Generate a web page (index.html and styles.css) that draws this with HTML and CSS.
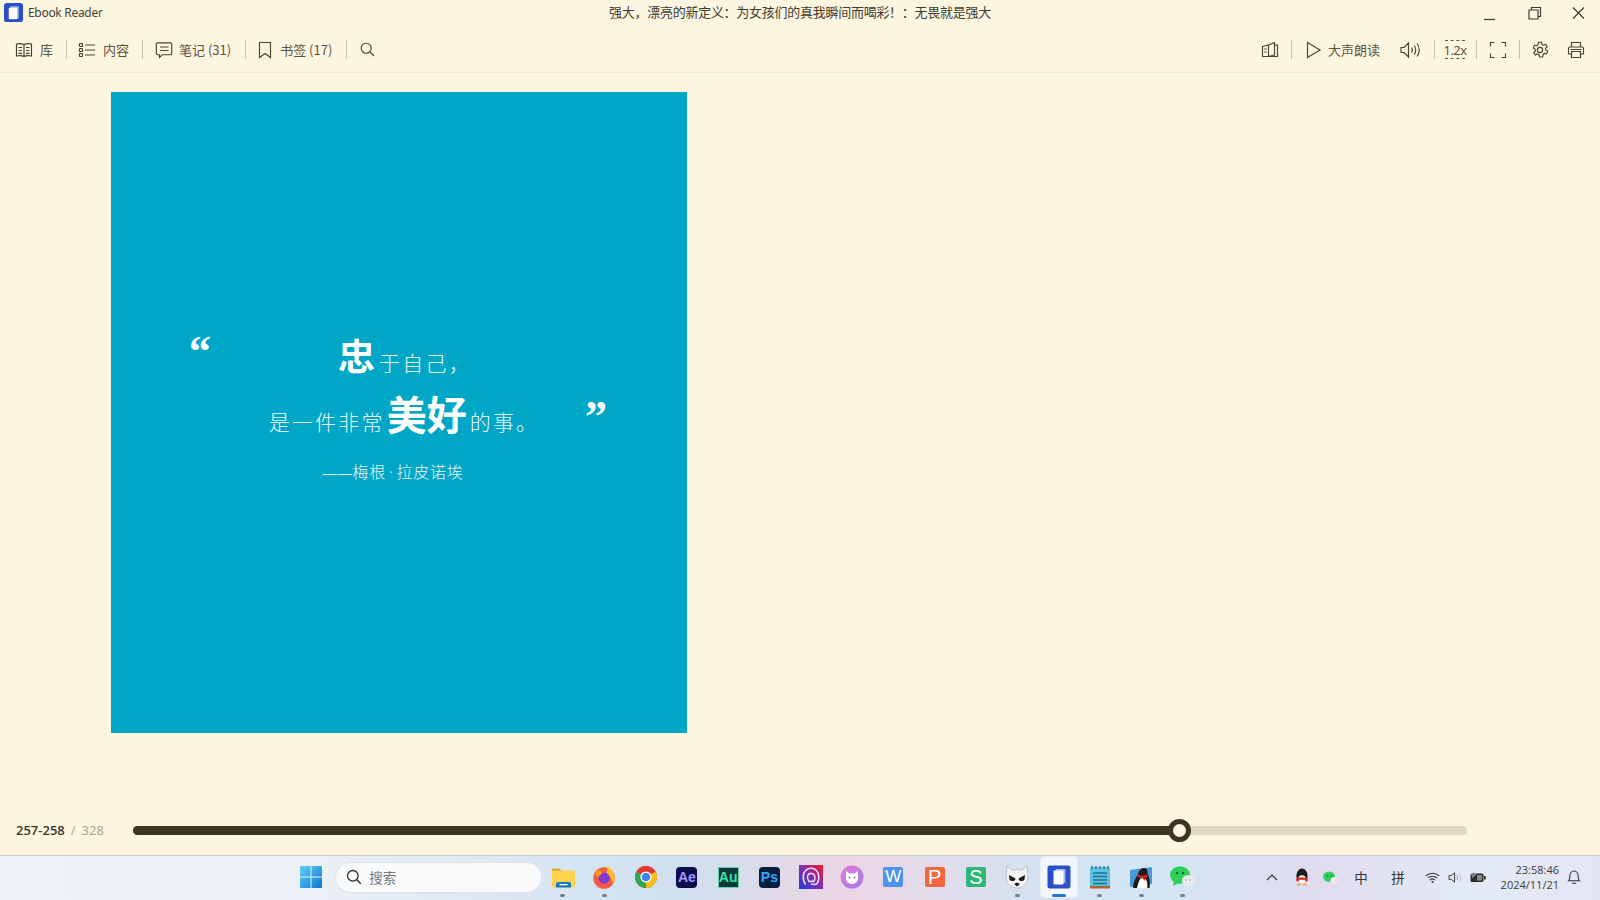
FILE: index.html
```html
<!DOCTYPE html>
<html lang="zh">
<head>
<meta charset="utf-8">
<title>Ebook Reader</title>
<link rel="stylesheet" href="styles.css">
</head>
<body>
<div class="app">
  <header class="titlebar">
    <div class="brand">
      <svg class="brand-icon" viewBox="0 0 20 20"><rect width="20" height="20" rx="3" fill="#2a4fc9"/><rect x="6.5" y="3.5" width="9" height="13" rx="1" fill="#9fb6ee"/><rect x="5" y="5" width="9" height="12" rx="1" fill="#fff"/></svg>
      <span>Ebook Reader</span>
    </div>
    <div class="doc-title">强大，漂亮的新定义：为女孩们的真我瞬间而喝彩！：无畏就是强大</div>
    <div class="win-controls">
      <svg class="win-btn" viewBox="0 0 44 26"><path d="M16 19.5h11" stroke="#3c3a34" stroke-width="1.2" fill="none"/></svg>
      <svg class="win-btn" viewBox="0 0 44 26"><path d="M17 10h9v9h-9zM19.5 10V7.5h9v9H26" stroke="#3c3a34" stroke-width="1.2" fill="none"/></svg>
      <svg class="win-btn" viewBox="0 0 44 26"><path d="M17 7.5l11 11M28 7.5l-11 11" stroke="#3c3a34" stroke-width="1.2" fill="none"/></svg>
    </div>
  </header>

  <nav class="toolbar">
    <div class="tool-group">
      <div class="tool t-lib">
        <svg class="ic" viewBox="0 0 18 18"><path d="M9 3.5C7 2.500 4 2.500 1.500 3v12c2.500-.5 5.500-.5 7.500.5 2-1 5-1 7.500-.5V3C14 2.500 11 2.500 9 3.500zM9 3.500v12M3.500 6.500h3.500M3.500 9.500h3.500M3.500 12.300h3.500M11 6.500h3.500M11 9.500h3.500M11 12.300h3.500"/></svg>
        <span>库</span>
      </div>
      <i class="sep"></i>
      <div class="tool t-toc">
        <svg class="ic" viewBox="0 0 18 18"><path d="M7 4h10M7 9h10M7 14h10"/><rect x="1.500" y="2.500" width="3" height="3" rx=".6"/><rect x="1.500" y="7.500" width="3" height="3" rx=".6"/><rect x="1.500" y="12.500" width="3" height="3" rx=".6"/></svg>
        <span>内容</span>
      </div>
      <i class="sep"></i>
      <div class="tool t-note">
        <svg class="ic" viewBox="0 0 18 18"><path d="M2.500 1.800h13a1.200 1.200 0 0 1 1.200 1.200v9.500a1.200 1.200 0 0 1-1.200 1.200H7.500L4.500 16.500v-2.800h-2a1.200 1.200 0 0 1-1.200-1.200V3a1.200 1.200 0 0 1 1.200-1.200zM5 6h8.500M5 9.500h8.500"/></svg>
        <span>笔记 (31)</span>
      </div>
      <i class="sep"></i>
      <div class="tool t-mark">
        <svg class="ic ic-narrow" viewBox="0 0 14 18"><path d="M1.500 1.500h11v15L7 12.500l-5.500 4z"/></svg>
        <span>书签 (17)</span>
      </div>
      <i class="sep"></i>
      <div class="tool t-search">
        <svg class="ic ic-small" viewBox="0 0 15 15"><circle cx="6.200" cy="6.200" r="5"/><path d="M10 10l4 4"/></svg>
      </div>
    </div>

    <div class="tool-group">
      <div class="tool t-bk">
        <svg class="ic" viewBox="0 0 18 18"><path d="M1.500 5.500l6-1.500v11.500h-6zM7.500 4l6-2.500v12.500l-6 1.500M13.500 4h3v11.500H7.500M3.300 8h2.400M3.300 11h2.400"/></svg>
      </div>
      <i class="sep"></i>
      <div class="tool t-play">
        <svg class="ic" viewBox="0 0 18 18"><path d="M2.500 1.500l12.500 7.500-12.500 7.500z"/></svg>
        <span>大声朗读</span>
      </div>
      <div class="tool t-vol">
        <svg class="ic ic-wide" viewBox="0 0 21 18"><path d="M1 6.500h3L8.500 2v14L4 11.500H1zM11.500 6.500c1 1.500 1 3.500 0 5M14.200 4.500c2 2.500 2 6.500 0 9M17 2.500c3 3.500 3 9.500 0 13"/></svg>
      </div>
      <i class="sep"></i>
      <div class="tool t-speed">
        <div class="speed"><span>1.2x</span></div>
      </div>
      <i class="sep"></i>
      <div class="tool t-full">
        <svg class="ic" viewBox="0 0 18 18"><path d="M1.500 5.500v-4h4M12.500 1.500h4v4M16.500 12.500v4h-4M5.500 16.500h-4v-4"/></svg>
      </div>
      <i class="sep"></i>
      <div class="tool t-gear">
        <svg class="ic" viewBox="0 0 18 18"><circle cx="9" cy="9" r="2.600"/><path d="M7.500 1.200h3l.5 2.300 1.500.7 2.100-1 1.600 2.400-1.600 1.600.2 1.700 1.900 1.200-1.100 2.800-2.300-.5-1.300 1.200-.3 2.400h-3l-.7-2.300-1.500-.7-2.100 1-1.600-2.400 1.600-1.600-.2-1.700-1.900-1.200 1.100-2.800 2.300.5 1.300-1.200z"/></svg>
      </div>
      <div class="tool t-print">
        <svg class="ic" viewBox="0 0 18 18"><path d="M4.500 6V1.500h9V6M4.500 13H1.500V7.500A1.500 1.500 0 0 1 3 6h12a1.500 1.500 0 0 1 1.500 1.500V13h-3M4.500 10.500h9v6h-9zM3.500 8.500h11"/></svg>
      </div>
    </div>
  </nav>

  <main class="reader">
    <article class="page">
      <div class="quote-mark open">“</div>
      <div class="quote-mark close">”</div>
      <p class="line line-1"><b class="big">忠</b>于自己，</p>
      <p class="line line-2">是一件非常<b class="big big-2">美好</b>的事。</p>
      <p class="author"><span class="dash">——</span>梅根<span class="dot">·</span>拉皮诺埃</p>
    </article>
  </main>

  <section class="progress">
    <div class="pages"><b>257-258</b><span class="slash">/</span><span class="total">328</span></div>
    <div class="track"><div class="fill" style="width:78.5%"><span class="thumb"></span></div></div>
  </section>

  <footer class="taskbar">
    <div class="tb-item tb-start">
      <svg class="tb-svg" viewBox="0 0 24 24"><defs><linearGradient id="w" x1="0" y1="0" x2="1" y2="1"><stop offset="0" stop-color="#5fd0f5"/><stop offset="1" stop-color="#0a78d4"/></linearGradient></defs><path fill="url(#w)" d="M1 2a1 1 0 0 1 1-1h9.500v10.500H1zM12.500 1H22a1 1 0 0 1 1 1v9.500H12.500zM1 12.500h10.500V23H2a1 1 0 0 1-1-1zM12.500 12.500H23V22a1 1 0 0 1-1 1h-9.500z"/></svg>
    </div>
    <div class="search">
      <svg class="search-ic" viewBox="0 0 16 16"><circle cx="6.800" cy="6.800" r="5.300"/><path d="M10.800 10.800l4 4"/></svg>
      <span>搜索</span>
    </div>
    <div class="tb-apps">
      <div class="tb-item run">
        <svg class="tb-svg" viewBox="0 0 24 24"><path d="M1 5a1.500 1.500 0 0 1 1.500-1.500h6L11 6H1z" fill="#e0a520"/><rect x="1" y="5.500" width="23" height="17" rx="1.500" fill="#fdd24d"/><path d="M5 22.500v-3.500a2 2 0 0 1 2-2h11a2 2 0 0 1 2 2v3.500z" fill="#1478c8"/><rect x="8.500" y="19" width="8" height="1.300" fill="#fff"/></svg>
      </div>
      <div class="tb-item run">
        <svg class="tb-svg" viewBox="0 0 24 24"><defs><radialGradient id="ff" cx=".5" cy=".55" r=".6"><stop offset="0" stop-color="#fb3f6f"/><stop offset="1" stop-color="#f06a2c"/></radialGradient></defs><circle cx="12" cy="13" r="10.800" fill="url(#ff)"/><path d="M16 1c2 3 6 6 6.500 11 .3 3-1 5-2 6-1-5-3-8-6-10z" fill="#ffc31f"/><circle cx="12" cy="13" r="5.500" fill="#7a3bd0"/><path d="M3 7c2-2 5-2 6.500 0 1 1.300 0 2.500-1.500 3-1 .3-1.500 1.500-1 3-2-1-4-3-4-6z" fill="#ff9a1f"/></svg>
      </div>
      <div class="tb-item">
        <svg class="tb-svg" viewBox="0 0 24 24"><circle cx="12" cy="12" r="11" fill="#e33b2e"/><path d="M12 12L2.500 6.500A11 11 0 0 0 12 23z" fill="#2fa84f"/><path d="M12 12L12 23A11 11 0 0 0 21.500 6.500z" fill="#fbc116"/><path d="M2.500 6.500A11 11 0 0 1 21.500 6.500L12 7z" fill="#e33b2e"/><circle cx="12" cy="12" r="5.600" fill="#fff"/><circle cx="12" cy="12" r="4.300" fill="#3f84ed"/></svg>
      </div>
      <div class="tb-item"><div class="adobe ae">Ae</div></div>
      <div class="tb-item"><div class="adobe au">Au</div></div>
      <div class="tb-item"><div class="adobe ps">Ps</div></div>
      <div class="tb-item">
        <svg class="tb-svg" viewBox="0 0 22 22"><defs><linearGradient id="g1" x1="0" y1="1" x2="1" y2="0"><stop offset="0" stop-color="#1b3ee0"/><stop offset=".55" stop-color="#8c2aa8"/><stop offset="1" stop-color="#f01a2a"/></linearGradient></defs><rect width="22" height="22" fill="url(#g1)"/><path d="M6 18c-2-3-2.500-5-2-8a7 7 0 0 1 14 0c.5 3 0 5-1.500 7-.8 1-3.500 1-5.500.5M9 15c-1.500-2-1.500-4-1-5.500a3.500 3.500 0 0 1 6.500 1c.3 1.500 0 3-.8 4.500z" fill="none" stroke="#e6dcf2" stroke-width="1.400"/></svg>
      </div>
      <div class="tb-item">
        <svg class="tb-svg" viewBox="0 0 24 24"><defs><linearGradient id="g2" x1="0" y1="0" x2="1" y2="1"><stop offset="0" stop-color="#e57ad6"/><stop offset="1" stop-color="#9e7cf0"/></linearGradient></defs><circle cx="12" cy="12" r="11.500" fill="url(#g2)"/><path d="M6 6l3.500 2.500h5L18 6v8a5.500 4.500 0 0 1-12 0z" fill="#fff"/><circle cx="9.500" cy="12.500" r=".9" fill="#8a5ad0"/><circle cx="14.500" cy="12.500" r=".9" fill="#8a5ad0"/></svg>
      </div>
      <div class="tb-item"><div class="wps w">W</div></div>
      <div class="tb-item"><div class="wps p">P</div></div>
      <div class="tb-item"><div class="wps s">S</div></div>
      <div class="tb-item run">
        <svg class="tb-svg" viewBox="0 0 24 24"><path d="M2 1l5.500 4.500c3-1.200 6-1.200 9 0L22 1l1 11c0 6-5 11-11 11S1 18 1 12z" fill="#f4f4f4" stroke="#999" stroke-width=".5"/><path d="M4 10l6.500 3.500c0 3-4.500 3.500-6 1zM20 10l-6.500 3.500c0 3 4.500 3.500 6 1zM9 19l3-1.500 3 1.500-3 2.500z" fill="#1c1c1c"/></svg>
      </div>
      <div class="tb-item active run-blue">
        <svg class="tb-svg" viewBox="0 0 24 24"><rect width="23" height="23" x=".5" y=".5" rx="2.500" fill="#2a4fc9"/><rect x="8.500" y="4" width="10" height="14" rx="1" fill="#9fb6ee"/><rect x="6.500" y="5.500" width="10" height="14" rx="1" fill="#fff"/></svg>
      </div>
      <div class="tb-item run">
        <svg class="tb-svg" viewBox="0 0 24 24"><rect x="2" y="2" width="20" height="21" rx="1.500" fill="#5cc3e4"/><rect x="2" y="21" width="20" height="2.500" fill="#b5622a"/><path d="M4 1v3M8 1v3M12 1v3M16 1v3M20 1v3" stroke="#2d6b88" stroke-width="1.300"/><path d="M5 8h14M5 11.500h14M5 15h14M5 18.500h14" stroke="#24708f" stroke-width="1.500"/></svg>
      </div>
      <div class="tb-item run">
        <svg class="tb-svg" viewBox="0 0 24 24"><path d="M1 5l22-3v17L1 22z" fill="#4a9ad8"/><path d="M4 23c0-6 3-11 5-13 0-3 2-7 6-7 3 0 4 3 3.500 6 2 3 3 9 2 14z" fill="#1c1c1c"/><path d="M8 23c1-4 2-8 4-10 3-1 5 1 6 4 .5 2 .5 4 .2 6z" fill="#fff"/><path d="M9 9.500c3 1.500 6 1.500 9.500 0L18 13l-2-1v4l-3-3-4-1z" fill="#d9261c"/></svg>
      </div>
      <div class="tb-item run">
        <svg class="tb-svg" viewBox="0 0 24 24"><ellipse cx="10" cy="10" rx="10" ry="8.800" fill="#2fd05a"/><path d="M4 16l-1 5 6-3z" fill="#2fd05a"/><circle cx="7" cy="8" r="1.200" fill="#15692e"/><circle cx="13" cy="8" r="1.200" fill="#15692e"/><ellipse cx="18" cy="15.500" rx="6" ry="5.500" fill="#eceaea"/><circle cx="16" cy="15" r=".8" fill="#999"/><circle cx="20" cy="15" r=".8" fill="#999"/></svg>
      </div>
    </div>

    <div class="tray">
      <div class="tr tr-chev"><svg class="tray-svg" viewBox="0 0 12 8"><path d="M1 7l5-5 5 5" fill="none" stroke="#333" stroke-width="1.200"/></svg></div>
      <div class="tr tr-qq"><svg class="tray-svg-qq" viewBox="0 0 14 16"><ellipse cx="7" cy="7" rx="5" ry="6.500" fill="#1c1c1c"/><ellipse cx="7" cy="10" rx="3.500" ry="3.500" fill="#f4f4f4"/><path d="M2.500 8.500h9l1 2.500-2 1-1-1.500H4.500l-1 1.500-2-1z" fill="#d9261c"/><path d="M3 14h3.500l-1 1.500H2.500zM11 14H7.500l1 1.500h3z" fill="#f6a61f"/></svg></div>
      <div class="tr tr-wx"><svg class="tray-svg-lg" viewBox="0 0 16 14"><ellipse cx="6.500" cy="6" rx="6.500" ry="5.500" fill="#2fd05a"/><circle cx="4.500" cy="5" r=".8" fill="#15692e"/><circle cx="8.500" cy="5" r=".8" fill="#15692e"/><ellipse cx="12" cy="10" rx="4" ry="3.500" fill="#eceaea"/></svg></div>
      <div class="tr tr-zh">中</div>
      <div class="tr tr-pin">拼</div>
      <div class="tr tr-wifi"><svg class="tray-svg-lg wifi" viewBox="0 0 16 12"><path d="M.8 4.200c4-3.800 10.400-3.800 14.400 0M3 6.500c2.800-2.600 7.200-2.600 10 0M5.200 8.700c1.600-1.400 4-1.400 5.600 0" fill="none" stroke="#333" stroke-width="1.100"/><circle cx="8" cy="10.800" r="1.100" fill="#333"/></svg></div>
      <div class="tr tr-spk"><svg class="tray-svg-lg" viewBox="0 0 16 14"><path d="M1 5h2.500L7 2v10L3.500 9H1z" fill="none" stroke="#333" stroke-width="1"/><path d="M9.500 4.500c1 1.500 1 3.500 0 5" fill="none" stroke="#777" stroke-width=".9"/><path d="M12 2.500c2 2.700 2 6.300 0 9" fill="none" stroke="#b5b5bb" stroke-width=".9"/></svg></div>
      <div class="tr tr-bat"><svg class="tray-svg-xl" viewBox="0 0 16 11"><rect x=".5" y="2" width="13" height="8.500" rx="1.500" fill="#2c2c2c"/><rect x="14" y="4.500" width="1.700" height="3.500" fill="#2c2c2c"/><path d="M4 0L1.500 3.500h2L2.500 6 6 2.500H4z" fill="#2c2c2c" stroke="#e8ecf6" stroke-width=".6"/><rect x="7" y="3.500" width="5" height="5.500" rx=".5" fill="#8a8a8a"/></svg></div>
      <div class="clock"><span>23:58:46</span><span>2024/11/21</span></div>
      <div class="tr tr-bell"><svg class="tray-svg-bell" viewBox="0 0 14 16"><path d="M1.500 11.800c1-1 1.300-2 1.300-4.300C2.800 4.500 4.500 2 7 2s4.200 2.500 4.200 5.500c0 2.300.3 3.300 1.300 4.300zM5.200 13.800c.6 1 3 1 3.600 0" fill="none" stroke="#333" stroke-width="1.100"/></svg></div>
    </div>
  </footer>
</div>
</body>
</html>
```

FILE: styles.css
```css
* { box-sizing: border-box; }
html, body { margin: 0; padding: 0; height: 100%; overflow: hidden; }
body {
  font-family: "Noto Sans", "Noto Sans CJK SC", sans-serif;
  background: #fcf5df;
  color: #4d4535;
}
.app { display: flex; flex-direction: column; height: 900px; }

/* title bar */
.titlebar { position: relative; display: flex; align-items: center; height: 25px; flex: none; }
.brand { display: flex; align-items: center; gap: 5px; padding-left: 4px; font-size: 12px; letter-spacing: -.3px; color: #47433a; }
.brand-icon { width: 19px; height: 19px; }
.doc-title { position: absolute; left: 0; right: 0; top: 2px; text-align: center; font-size: 13px; letter-spacing: -.27px; line-height: 20px; color: #3e3a30; font-family: "Noto Sans CJK SC", sans-serif; }
.win-controls { margin-left: auto; display: flex; }
.win-btn { width: 44px; height: 26px; }

/* toolbar */
.toolbar { display: flex; justify-content: space-between; align-items: center; height: 48px; flex: none; padding: 2px 15px 0 15px; border-bottom: 1px solid #f1e8d2; }
.tool-group { display: flex; align-items: center; }
.tool { display: flex; align-items: center; font-size: 13px; color: #5c5342; font-family: "Noto Sans CJK SC", "Noto Sans", sans-serif; }
.sep { display: block; width: 1px; height: 19px; background: #c8c0ab; }
.ic { width: 18px; height: 18px; fill: none; stroke: #4a4232; stroke-width: 1.150; flex: none; }
.ic-narrow { width: 14px; height: 18px; }
.ic-small { width: 15px; height: 15px; }
.ic-wide { width: 21px; height: 18px; }
.t-lib { gap: 7px; padding-right: 13px; }
.t-toc { gap: 7px; padding: 0 13px 0 11px; }
.t-note { gap: 6px; padding: 0 14px 0 12px; }
.t-mark { gap: 8px; padding: 0 14px 0 12px; }
.t-search { padding-left: 13px; }
.t-bk { padding-right: 12px; }
.t-play { gap: 5px; padding: 0 20px 0 13px; }
.t-vol { padding-right: 13px; }
.t-speed { padding: 0 11px 0 10px; }
.t-full { padding: 0 12px 0 12px; }
.t-gear { padding: 0 18px 0 11px; }
.speed { width: 20px; height: 19px; display: flex; align-items: center; justify-content: center; border-top: 1.500px dashed #5c5342; border-bottom: 1.500px dashed #5c5342; font-size: 13px; letter-spacing: -.6px; font-family: "Noto Sans", sans-serif; }

/* reader */
.reader { flex: 1; min-height: 0; padding: 19px 0 0 111px; }
.page { position: relative; width: 576px; height: 641px; background: #00a6c6; color: #e6f6f9; padding-top: 234px; font-family: "Noto Sans CJK SC", sans-serif; text-align: center; }
.line { margin: 0; height: 58px; font-size: 21px; letter-spacing: 2.200px; font-weight: 300; line-height: 58px; }
.big { font-weight: 700; font-size: 37px; letter-spacing: 0; color: #fff; margin-right: 4px; }
.big-2 { font-size: 40px; margin: 0 3px 0 2px; }
.line-1 { padding-left: 12px; }
.line-2 { padding-left: 10px; }
.author { margin: 17px 0 0; padding-right: 12px; font-size: 16px; font-weight: 300; letter-spacing: .7px; line-height: 24px; }
.dash { font-family: "Noto Sans", sans-serif; font-size: 15px; letter-spacing: 0; }
.dot { font-family: "Noto Sans", sans-serif; margin: 0 3px; }
.quote-mark { position: absolute; font-family: "Liberation Serif", serif; font-weight: 700; font-size: 44px; line-height: 44px; color: #fff; }
.open { left: 78px; top: 238px; }
.close { left: 474px; top: 303px; }

/* progress */
.progress { display: flex; align-items: center; height: 42px; flex: none; padding: 0 133px 8px 16px; font-size: 13px; }
.pages { width: 117px; flex: none; font-family: "Open Sans", sans-serif; font-size: 13px; }
.pages b { font-weight: 600; color: #3d362a; }
.slash { margin: 0 6px; color: #a8a290; }
.total { color: #a8a290; }
.track { flex: 1; height: 9px; border-radius: 5px; background: #e0d8c3; }
.fill { position: relative; height: 100%; border-radius: 5px; background: #41341c; }
.thumb { position: absolute; right: -11px; top: -7px; width: 23px; height: 23px; border-radius: 50%; background: #fcf5df; border: 5px solid #41341c; }

/* taskbar */
.taskbar {
  display: flex; align-items: center; height: 45px; flex: none; padding: 0 0 2px 290px;
  border-top: 1px solid #c8ccd4;
  background: linear-gradient(90deg, #eef2f6 0%, #eaf0f5 20%, #d5e5f2 36%, #cfdfee 43%, #ecd5e4 53%, #d5e2f0 64%, #d3e6f4 72%, #e0dcf0 82%, #e3eaf6 92%, #e4e6f4 100%);
}
.tb-item { position: relative; width: 41.300px; height: 40px; flex: none; display: flex; align-items: center; justify-content: center; border-radius: 4px; }
.tb-svg { width: 24px; height: 24px; }
.tb-start { margin-right: 5px; }
.search { display: flex; align-items: center; width: 205px; height: 29px; flex: none; gap: 7px; padding-left: 10px; border-radius: 15px; background: #f8fafc; box-shadow: 0 0 0 1px #e0e4ea, 0 1px 1px #c9ced6; font-size: 13.500px; color: #777; font-family: "Noto Sans CJK SC", sans-serif; }
.search-ic { width: 16px; height: 16px; fill: none; stroke: #2c2c2c; stroke-width: 1.300; }
.tb-apps { display: flex; margin-left: 1px; }
.run::after, .run-blue::after { content: ""; position: absolute; bottom: 0; left: 50%; width: 5px; height: 3px; margin-left: -2.500px; border-radius: 2px; background: #7c8085; }
.active { background: #f2f6fb; box-shadow: 0 0 0 1px #e8edf3; width: 36px; margin: 0 2.650px; }
.run-blue::after { width: 14px; margin-left: -7px; background: #1a76d2; }
.adobe { width: 21px; height: 21px; border-radius: 4px; display: flex; align-items: center; justify-content: center; font: 700 14px "Liberation Sans", sans-serif; }
.ae { background: #0d0a4e; color: #9a9cff; }
.au { background: #0c3a38; color: #3ce0a8; border-radius: 0; border: 1.500px solid #5fd3ae; }
.ps { background: #061e3c; color: #31a8ff; }
.wps { width: 20px; height: 20px; border-radius: 2px; display: flex; align-items: center; justify-content: center; color: #fff; font: 400 17px "Liberation Sans", sans-serif; }
.w { background: #4e92ee; }
.p { background: #f2673f; font-size: 20px; }
.s { background: #2db87a; font-size: 20px; }
.tray { margin-left: auto; display: flex; align-items: center; padding-right: 11px; height: 100%; color: #333; }
.tr { display: flex; align-items: center; justify-content: center; flex: none; font-family: "Noto Sans CJK SC", sans-serif; font-size: 13.500px; }
.tr-chev { width: 32px; }
.tr-qq { width: 28px; }
.tr-wx { width: 29px; }
.tr-zh { width: 32px; }
.tr-pin { width: 42px; }
.tr-wifi { width: 26px; }
.tr-spk { width: 20px; }
.tr-bat { width: 26px; }
.tr-bell { width: 30px; }
.tray-svg { width: 12px; height: 8px; }
.tray-svg-lg { width: 15px; height: 15px; }
.tray-svg-qq { width: 16px; height: 18px; }
.tray-svg-xl { width: 16px; height: 12px; }
.tray-svg-bell { width: 14px; height: 16px; }
.clock { width: 68px; flex: none; display: flex; flex-direction: column; align-items: flex-end; font: 11px/15px "Open Sans", sans-serif; color: #3a3a3a; }
```
